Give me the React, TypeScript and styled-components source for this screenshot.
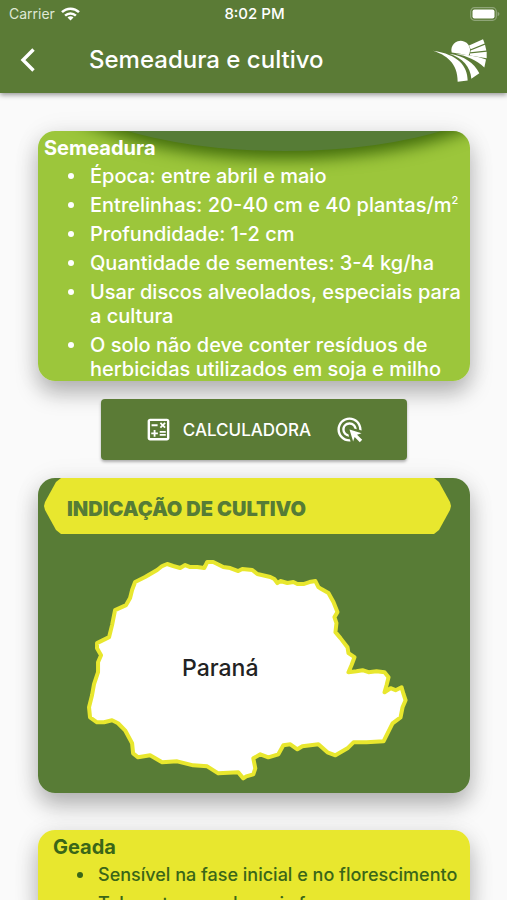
import React from "react";
import styled, { createGlobalStyle } from "styled-components";
import { MdAdsClick, MdOutlineCalculate } from "react-icons/md";

const GlobalStyle = createGlobalStyle`
  * { box-sizing: border-box; }
  body {
    margin: 0;
    background: #fafafa;
    font-family: Inter, "Liberation Sans", sans-serif;
  }
`;

const Screen = styled.div`
  height: 100vh;
  display: flex;
  flex-direction: column;
  overflow: hidden;
`;

const Top = styled.header`
  position: relative;
  z-index: 1;
  flex: none;
  background: #5b7b36;
  color: #fff;
  box-shadow: 0 2px 5px rgba(0, 0, 0, 0.4);
`;

const StatusBar = styled.div`
  display: grid;
  grid-template-columns: 1fr auto 1fr;
  align-items: center;
  height: 27px;
  padding: 0 7px 0 9px;
  font-size: 14px;
  line-height: 18px;
`;

const Carrier = styled.span`
  display: flex;
  align-items: center;
  gap: 6px;
  color: #dfe8d5;
`;

const Clock = styled.time`
  font-size: 15px;
  font-weight: 500;
`;

const BatterySlot = styled.span`
  display: flex;
  justify-content: flex-end;
`;

const AppBar = styled.div`
  display: flex;
  align-items: center;
  height: 66px;
  padding: 0 19px 0 8px;
`;

const BackButton = styled.button`
  display: flex;
  align-items: center;
  justify-content: center;
  width: 40px;
  height: 48px;
  padding: 0;
  border: 0;
  background: none;
  color: inherit;
`;

const PageTitle = styled.h1`
  flex: 1;
  margin: 0 0 0 41px;
  font-size: 24px;
  font-weight: 500;
  line-height: 30px;
`;

const Content = styled.main`
  flex: 1;
  min-height: 0;
  overflow-y: auto;
  scrollbar-width: none;
  padding: 38px 37px 24px 38px;
`;

const Card = styled.section<{ $bg: string; $fg: string }>`
  position: relative;
  overflow: hidden;
  border-radius: 17px;
  background: ${(p) => p.$bg};
  color: ${(p) => p.$fg};
`;

const Shadow = styled.div<{ $gap: number }>`
  margin-bottom: ${(p) => p.$gap}px;
  border-radius: 17px;
  box-shadow: 0 12px 22px rgba(0, 0, 0, 0.27), 0 2px 28px rgba(0, 0, 0, 0.07);
`;

const Arch = styled.div`
  position: absolute;
  left: 2%;
  top: -140px;
  width: 110%;
  height: 160px;
  border-radius: 50%;
  background: #567c36;
  box-shadow: 0 6px 16px 2px #426c0c;
`;

const CardBody = styled.div<{ $inset: number }>`
  position: relative;
  padding: 5px 6px 0 ${(p) => p.$inset}px;
`;

const CardTitle = styled.h2`
  margin: 0 0 4px;
  font-size: 20px;
  font-weight: 700;
  line-height: 24px;
`;

const List = styled.ul`
  display: grid;
  gap: 5px;
  margin: 0;
  padding: 0;
  list-style: none;
`;

const Item = styled.li<{ $tight?: boolean }>`
  display: grid;
  grid-template-columns: ${(p) => (p.$tight ? 45 : 46)}px 1fr;
  align-items: start;
  font-size: ${(p) => (p.$tight ? 18 : 20)}px;
  font-weight: 500;
  line-height: 24px;

  &::before {
    content: "";
    justify-self: center;
    width: 6px;
    height: 6px;
    margin: 9px 0 0 8px;
    border-radius: 50%;
    background: currentColor;
  }

  sup {
    font-size: 11px;
    line-height: 0;
  }
`;

const CalcButton = styled.button`
  position: relative;
  display: flex;
  align-items: center;
  justify-content: center;
  width: 71%;
  height: 61px;
  margin: 0 auto 18px;
  padding: 0;
  border: 0;
  border-radius: 4px;
  background: #5b7b36;
  color: #fff;
  font: 500 17px/24px Inter, "Liberation Sans", sans-serif;
  box-shadow: 0 2px 3px rgba(0, 0, 0, 0.3);
`;

const CalcLabel = styled.span`
  margin: 0 24px 0 10px;
`;

const Banner = styled.h2`
  height: 56px;
  margin: 0 19px 0 6px;
  padding: 3px 0 0 23px;
  background: #e8e72e;
  color: #567c36;
  font-size: 20px;
  font-weight: 900;
  line-height: 56px;
  clip-path: polygon(
    17px 0, calc(100% - 17px) 0, calc(100% - 12px) 4px, calc(100% - 1px) 24px,
    100% 28px, calc(100% - 1px) 32px, calc(100% - 12px) 52px, calc(100% - 17px) 56px,
    17px 56px, 12px 52px, 1px 32px, 0 28px, 1px 24px, 12px 4px
  );
`;

const MapFrame = styled.figure`
  display: flex;
  justify-content: center;
  margin: 0;
  padding: 22px 10px 10px 0;

  svg { width: 80%; height: auto; }
  text { font: 500 23px Inter, "Liberation Sans", sans-serif; }
`;

const WifiIcon = () => (
  <svg width="19" height="14" viewBox="0 0 19 14" fill="none" stroke="#fff" strokeWidth="2.5" aria-hidden="true">
    <path d="M1 5.2C5.8.5 13.200.5 18 5.200" />
    <path d="M4.100 8.600C7.200 5.700 11.800 5.700 14.900 8.600" />
    <path d="M9.500 13.500L6.500 10.500C8.200 8.900 10.800 8.900 12.500 10.500Z" fill="#fff" stroke="none" />
  </svg>
);

const BatteryIcon = () => (
  <svg width="30" height="14" viewBox="0 0 30 14" aria-hidden="true">
    <rect x=".7" y=".7" width="25.600" height="12.600" rx="3.800" fill="none" stroke="#8fa578" strokeWidth="1.200" />
    <rect x="2.500" y="2.500" width="22" height="9" rx="2" fill="#fff" />
    <path d="M27.600 4.800C30 5.800 30 8.200 27.600 9.200Z" fill="#8fa578" />
  </svg>
);

const BackIcon = () => (
  <svg width="16" height="26" viewBox="0 0 16 26" fill="none" stroke="#fff" strokeWidth="3.400" aria-hidden="true">
    <path d="M13.500 2.500L3 13L13.500 23.500" />
  </svg>
);

const FieldLogo = () => (
  <svg width="56" height="47" viewBox="534 108 168 140" fill="#fff" role="img" aria-label="Logo">
    <path d="M593 154A28 28 0 1 1 643 163C627 159 610 156 593 154Z" />
    <path d="M645 133L687 114L692 127L650 144Z" />
    <path d="M650 148L693 131L697 148L649 153Z" />
    <path d="M648 157L698 152V171L648 163Z" />
    <path d="M604 158C638 160 670 166 696 175L691 199C667 177 640 165 604 158Z" />
    <path d="M586 158C625 170 650 198 652 233L676 216C660 186 630 164 586 158Z" />
    <path d="M537 149C575 161 612 185 611 242L641 238C641 195 612 160 537 149Z" />
  </svg>
);

const outline =
  "M97 643L109 637L112 625L115 610L126 605L130 598L132 590L135 582L145 577L157 570L162 566L167 564L173 566L180 568L185 565L190 567L197 567L204 568L207 562L213 562L223 567L230 568L238 571L242 569L252 570L257 574L270 577L274 579L277 583L280 581L287 583L293 582L297 584L303 584L309 582L315 581L318 587L321 589L328 593L333 602L337 612L334 617L336 623L335 632L340 638L347 647L348 653L354 657L351 665L348 672L356 671L362 670L368 672L376 671L384 672L388 677L386 685L384 692L390 688L395 690L401 687L403 694L405 700L402 707L400 717L392 723L387 733L383 741L366 742L353 742L347 748L335 755L327 752L318 744L302 746L297 749L290 744L283 745L278 754L268 757L260 754L253 758L255 768L253 774L246 776L243 778L238 772L218 773L207 766L193 765L185 763L177 761L162 762L150 755L138 757L133 753L132 743L125 730L118 723L112 720L104 722L97 722L90 717L89 707L92 695L94 684L98 672L98 662L101 655L97 648Z";

const Parana = () => (
  <svg viewBox="80 556 337 227" role="img" aria-label="Mapa do Paraná">
    <path d={outline} fill="#fff" stroke="#e8e72e" strokeWidth="4" strokeLinejoin="round" />
    <text x="220" y="676" textAnchor="middle" fill="#222">Paraná</text>
  </svg>
);

export default function App() {
  return (
    <Screen>
      <GlobalStyle />
      <Top>
        <StatusBar>
          <Carrier>Carrier <WifiIcon /></Carrier>
          <Clock>8:02 PM</Clock>
          <BatterySlot><BatteryIcon /></BatterySlot>
        </StatusBar>
        <AppBar>
          <BackButton type="button" aria-label="Voltar"><BackIcon /></BackButton>
          <PageTitle>Semeadura e cultivo</PageTitle>
          <FieldLogo />
        </AppBar>
      </Top>
      <Content>
        <Shadow $gap={18}>
          <Card $bg="#9cc63b" $fg="#fff">
            <Arch />
            <CardBody $inset={6}>
              <CardTitle>Semeadura</CardTitle>
              <List>
                <Item>Época: entre abril e maio</Item>
                <Item><span>Entrelinhas: 20-40 cm e 40 plantas/m<sup>2</sup></span></Item>
                <Item>Profundidade: 1-2 cm</Item>
                <Item>Quantidade de sementes: 3-4 kg/ha</Item>
                <Item>Usar discos alveolados, especiais para a cultura</Item>
                <Item>O solo não deve conter resíduos de herbicidas utilizados em soja e milho</Item>
              </List>
            </CardBody>
          </Card>
        </Shadow>
        <CalcButton type="button">
          <MdOutlineCalculate size={29} aria-hidden="true" />
          <CalcLabel>CALCULADORA</CalcLabel>
          <MdAdsClick size={29} aria-hidden="true" />
        </CalcButton>
        <Shadow $gap={37}>
          <Card $bg="#587c36" $fg="#222">
            <Banner>INDICAÇÃO DE CULTIVO</Banner>
            <MapFrame><Parana /></MapFrame>
          </Card>
        </Shadow>
        <Shadow $gap={0}>
          <Card $bg="#e8e72e" $fg="#3a6618">
            <CardBody $inset={15}>
              <CardTitle>Geada</CardTitle>
              <List>
                <Item $tight>Sensível na fase inicial e no florescimento</Item>
                <Item $tight>Tolerante quando mais for</Item>
              </List>
            </CardBody>
          </Card>
        </Shadow>
      </Content>
    </Screen>
  );
}
